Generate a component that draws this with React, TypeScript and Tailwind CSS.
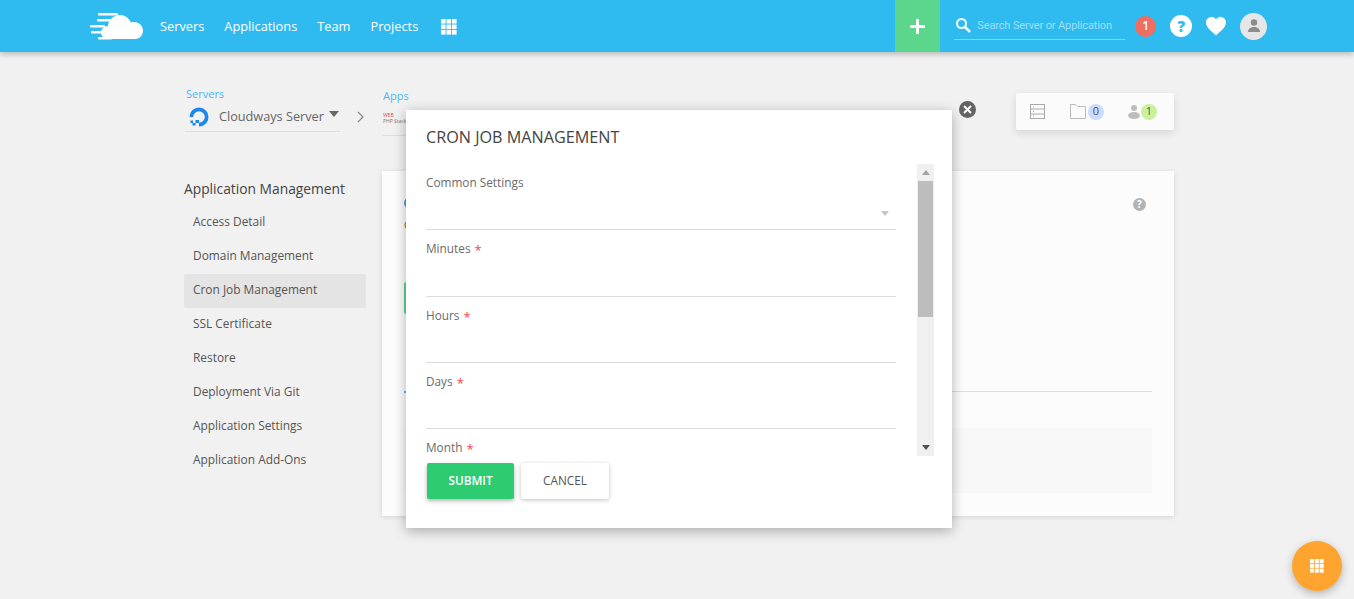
import React from "react";
import { Check } from "lucide-react";

const sideLinks = [
  "Access Detail",
  "Domain Management",
  "Cron Job Management",
  "SSL Certificate",
  "Restore",
  "Deployment Via Git",
  "Application Settings",
  "Application Add-Ons",
];

const navLinks = ["Servers", "Applications", "Team", "Projects"];

const GridIcon = ({ size, className }: { size: number; className?: string }) => (
  <svg width={size} height={size} viewBox="0 0 16 16" className={className} fill="currentColor">
    {[0, 5.5, 11].map((y) =>
      [0, 5.5, 11].map((x) => <rect key={`${x}-${y}`} x={x} y={y} width="4.6" height="4.6" />)
    )}
  </svg>
);

const Logo = () => (
  <svg width="54" height="28" viewBox="0 0 54 28" fill="white">
    <path d="M18 27c-4 0-7-3-7-6.500s3-6.500 7-6.500c.5-6 5-11 12-11 5 0 9 3 11 7.500 1-.5 2-.5 3-.5 5 0 9 4 9 8.500s-3 8.500-8 8.500z" />
    <rect x="8" y="1" width="20" height="2.500" rx="1" />
    <rect x="7" y="7" width="15" height="2.500" rx="1" />
    <rect x="0" y="13" width="15" height="2.500" rx="1" />
    <rect x="1" y="19" width="11" height="2.500" rx="1" />
    <rect x="8" y="25" width="14" height="2.500" rx="1" />
  </svg>
);

const Field = ({ label, height }: { label: string; height: string }) => (
  <div className={`${height} relative`}>
    <div className="flex items-center pt-[10px] text-[11.8px] leading-[17px] text-[#6b6b6b]">
      {label}
      <span className="ml-[4px] mt-[3px] text-[13px] leading-none text-[#f0484b]">*</span>
    </div>
    <div className="absolute bottom-0 left-0 right-0 h-px bg-[#dcdcdc]" />
  </div>
);

export default function App() {
  return (
    <div
      className="relative h-[599px] w-[1354px] overflow-hidden bg-[#f1f1f1] text-[#555]"
      style={{ fontFamily: '"Open Sans", sans-serif' }}
    >
      {/* Top bar */}
      <header className="flex h-[52px] items-center bg-[#2fbbf0] pl-[90px] shadow-[0_2px_6px_rgba(0,0,0,0.25)]">
        <Logo />
        <nav className="ml-[16px] flex items-center gap-[20px] pt-[1px] text-[12.8px] text-white">
          {navLinks.map((link) => (
            <span key={link}>{link}</span>
          ))}
          <GridIcon size={16} className="ml-[3px] text-white" />
        </nav>
        <div className="ml-[438px] flex h-full w-[45px] items-center justify-center bg-[#5cd68d]">
          <svg width="15" height="15" viewBox="0 0 15 15" fill="white">
            <rect x="6" y="0" width="3" height="15" />
            <rect x="0" y="6" width="15" height="3" />
          </svg>
        </div>
        <div className="ml-[14px] flex h-[27px] w-[171px] items-center border-b border-[#7fd5f5] pb-[1px]">
          <svg width="16" height="16" viewBox="0 0 16 16" fill="none" stroke="white" strokeWidth="2" className="ml-[1px]">
            <circle cx="6.500" cy="6.500" r="4.500" />
            <path d="M10 10l5 5" strokeWidth="2.500" />
          </svg>
          <span className="ml-[6px] whitespace-nowrap pt-[3px] text-[11px] tracking-[-0.13px] text-[#9fdff8]" style={{ fontFamily: '"Roboto", sans-serif' }}>
            Search Server or Application
          </span>
        </div>
        <div className="ml-[10px] flex h-[21px] w-[21px] items-center justify-center rounded-full bg-[#ee6e62] text-[12px] font-semibold text-white">
          1
        </div>
        <div className="ml-[14px] flex h-[22px] w-[22px] items-center justify-center rounded-full bg-white text-[15px] font-extrabold text-[#2fbbf0]">
          ?
        </div>
        <svg width="22" height="20" viewBox="0 0 24 22" fill="white" className="ml-[13px]">
          <path d="M12 21.500C9 18.500 1 13.500 1 7a6 6 0 0 1 11-3.300A6 6 0 0 1 23 7c0 6.500-8 11.500-11 14.500z" />
        </svg>
        <div className="ml-[13px] flex h-[27px] w-[27px] items-center justify-center rounded-full bg-[#e6e6e6]">
          <svg width="14" height="14" viewBox="0 0 14 14" fill="#8c8c8c">
            <circle cx="7" cy="3.500" r="3.200" />
            <path d="M1 13c0-3.500 3-5 6-5s6 1.500 6 5z" />
          </svg>
        </div>
      </header>

      {/* Breadcrumb row */}
      <div className="ml-[185px] mr-[180px] mt-[36px] flex h-[44px]">
        <div className="w-[155px]">
          <div className="pl-[1px] text-[11px] leading-[12px] text-[#4db8f0]">Servers</div>
          <div className="flex h-[32px] items-center border-b border-[#dedede]">
            <svg width="20" height="20" viewBox="0 0 20 20" className="ml-[4px] mt-[2px] shrink-0">
              <path d="M10 19.500v-3.700a5.800 5.800 0 1 0-5.800-5.800H.5a9.500 9.500 0 1 1 9.500 9.500z" fill="#1a86f0" />
              <rect x="6.500" y="13" width="3.500" height="3" fill="#1a86f0" />
              <rect x="3.500" y="16" width="3" height="2.500" fill="#1a86f0" />
              <rect x="1.500" y="13.500" width="2.500" height="2.500" fill="#1a86f0" />
            </svg>
            <span className="ml-[10px] whitespace-nowrap pt-[2px] text-[12.7px] text-[#666]">Cloudways Server</span>
            <span className="ml-[5px] mb-[3px] h-0 w-0 border-x-[5.5px] border-t-[6px] border-x-transparent border-t-[#666]" />
          </div>
        </div>
        <svg width="8" height="12" viewBox="0 0 8 12" fill="none" stroke="#888" strokeWidth="1.200" className="ml-[17px] mt-[23px]">
          <path d="M1 1l5 5-5 5" />
        </svg>
        <div className="ml-[18px] mt-[2px] w-[60px]">
          <div className="text-[11px] leading-[12px] text-[#4db8f0]">Apps</div>
          <div className="mt-[7px] h-[27px] w-[40px] border-b border-[#dedede] pt-[3px] text-[5px] leading-[6px] text-[#777]">
            <div className="whitespace-nowrap text-[#c0553a]">WEB</div>
            <div className="whitespace-nowrap">PHP Stack</div>
          </div>
        </div>
        <div className="ml-auto mt-[5px] flex h-[37px] w-[158px] items-center rounded-[2px] bg-[#fbfbfb] pl-[14px] shadow-[0_3px_8px_rgba(0,0,0,0.12)]">
          <svg width="15" height="15" viewBox="0 0 15 15" fill="none" stroke="#aaa">
            <rect x="0.500" y="0.500" width="14" height="14" />
            <path d="M0.500 5h14M0.500 10h14M3 3h1M3 7.500h1M3 12h1" />
          </svg>
          <svg width="16" height="15" viewBox="0 0 16 15" fill="none" stroke="#bbb" className="ml-[25px]">
            <path d="M0.500 14.500V0.500h5l2 2h8v12z" />
          </svg>
          <span className="ml-[2px] flex h-4 w-4 items-center justify-center rounded-full bg-[#ccdafd] text-[11px] text-[#555]">0</span>
          <svg width="12" height="15" viewBox="0 0 12 15" fill="#bdbdbd" className="ml-[24px]">
            <circle cx="6" cy="4" r="3" />
            <ellipse cx="6" cy="11.500" rx="6" ry="3.500" />
          </svg>
          <span className="ml-[1px] flex h-4 w-4 items-center justify-center rounded-full bg-[#c9f09a] text-[11px] text-[#555]">1</span>
        </div>
      </div>

      {/* Body */}
      <div className="ml-[184px] mt-[39px] flex w-[990px] items-start">
        <aside className="w-[182px]">
          <h3 className="mb-[7px] mt-[8px] text-[13.8px] leading-[20px] text-[#444]">Application Management</h3>
          <ul>
            {sideLinks.map((link) => (
              <li
                key={link}
                className={`flex h-[34px] items-center rounded-[2px] pb-[2px] pl-[9px] text-[11.9px] text-[#555] ${
                  link === "Cron Job Management" ? "bg-[#e4e4e4]" : ""
                }`}
              >
                {link}
              </li>
            ))}
          </ul>
        </aside>
        <main className="relative ml-[16px] h-[345px] w-[792px] bg-[#fcfcfc] shadow-[0_1px_5px_rgba(0,0,0,0.12)]">
          <div className="flex items-start justify-between pl-[22px] pr-[28px] pt-[26px]">
            <div>
              <div className="h-3 w-3 rounded-full bg-[#2fa8e8]" />
              <div className="mt-[8px] text-[11px] leading-[15px] text-[#b5532a]">Cron Jobs</div>
              <div className="mt-[50px] flex h-[32px] w-[90px] items-center justify-center rounded-[2px] bg-[#5cd68d]">
                <Check size={14} className="text-white" />
              </div>
              <div className="mt-[77px] h-[2px] w-[8px] bg-[#4db8f0]" />
            </div>
            <div className="mt-[1px] flex h-[13px] w-[13px] items-center justify-center rounded-full bg-[#b3b3b3] text-[10px] font-bold text-white">
              ?
            </div>
          </div>
          <div className="ml-[22px] mr-[22px] -mt-[2px] h-px bg-[#dedede]" />
          <div className="ml-[22px] mr-[22px] mt-[36px] h-[65px] bg-[#f8f8f8]" />
        </main>
      </div>

      {/* Modal */}
      <div className="absolute left-[406px] top-[110px] h-[418px] w-[546px] bg-white shadow-[0_3px_12px_rgba(0,0,0,0.3)]">
        <h2 className="pl-[20px] pt-[17px] text-[16.2px] font-medium leading-[20px] text-[#444]">CRON JOB MANAGEMENT</h2>
        <div className="relative ml-[20px] mt-[17px] h-[292px] w-[508px] overflow-hidden">
          <div className="w-[470px]">
            <div className="relative h-[66px]">
              <div className="pt-[10px] text-[11.8px] leading-[17px] text-[#6b6b6b]">Common Settings</div>
              <span className="absolute right-[7px] top-[47px] h-0 w-0 border-x-[4px] border-t-[5px] border-x-transparent border-t-[#c4c4c4]" />
              <div className="absolute bottom-0 left-0 right-0 h-px bg-[#dcdcdc]" />
            </div>
            <Field label="Minutes" height="h-[67px]" />
            <Field label="Hours" height="h-[66px]" />
            <Field label="Days" height="h-[66px]" />
            <Field label="Month" height="h-[66px]" />
          </div>
          <div className="absolute right-0 top-0 flex h-[292px] w-[17px] flex-col items-center bg-[#f0f0f0]">
            <span className="mt-[6px] h-0 w-0 border-x-[4px] border-b-[5px] border-x-transparent border-b-[#a3a3a3]" />
            <div className="mt-[6px] h-[136px] w-[15px] bg-[#bdbdbd]" />
            <span className="mt-auto mb-[6px] h-0 w-0 border-x-[4px] border-t-[5px] border-x-transparent border-t-[#505050]" />
          </div>
        </div>
        <div className="ml-[21px] mt-[7px] flex gap-[7px]">
          <button className="h-[36px] w-[87px] rounded-[2px] bg-[#2ecc71] text-[11.8px] font-semibold text-white shadow-[0_2px_4px_rgba(0,0,0,0.3)]">
            SUBMIT
          </button>
          <button className="h-[36px] w-[88px] rounded-[2px] bg-white text-[11.8px] font-medium text-[#555] shadow-[0_1px_4px_rgba(0,0,0,0.25)]">
            CANCEL
          </button>
        </div>
        <div className="absolute left-[553px] top-[-9px] flex h-[17px] w-[17px] items-center justify-center rounded-full bg-[#636363]">
          <svg width="9" height="9" viewBox="0 0 9 9" stroke="white" strokeWidth="2">
            <path d="M1 1l7 7M8 1l-7 7" />
          </svg>
        </div>
      </div>

      {/* Floating action button */}
      <div className="absolute left-[1292px] top-[541px] flex h-[50px] w-[50px] items-center justify-center rounded-full bg-[#ffa42e] shadow-[0_3px_8px_rgba(0,0,0,0.25)]">
        <GridIcon size={14} className="text-white" />
      </div>
    </div>
  );
}
